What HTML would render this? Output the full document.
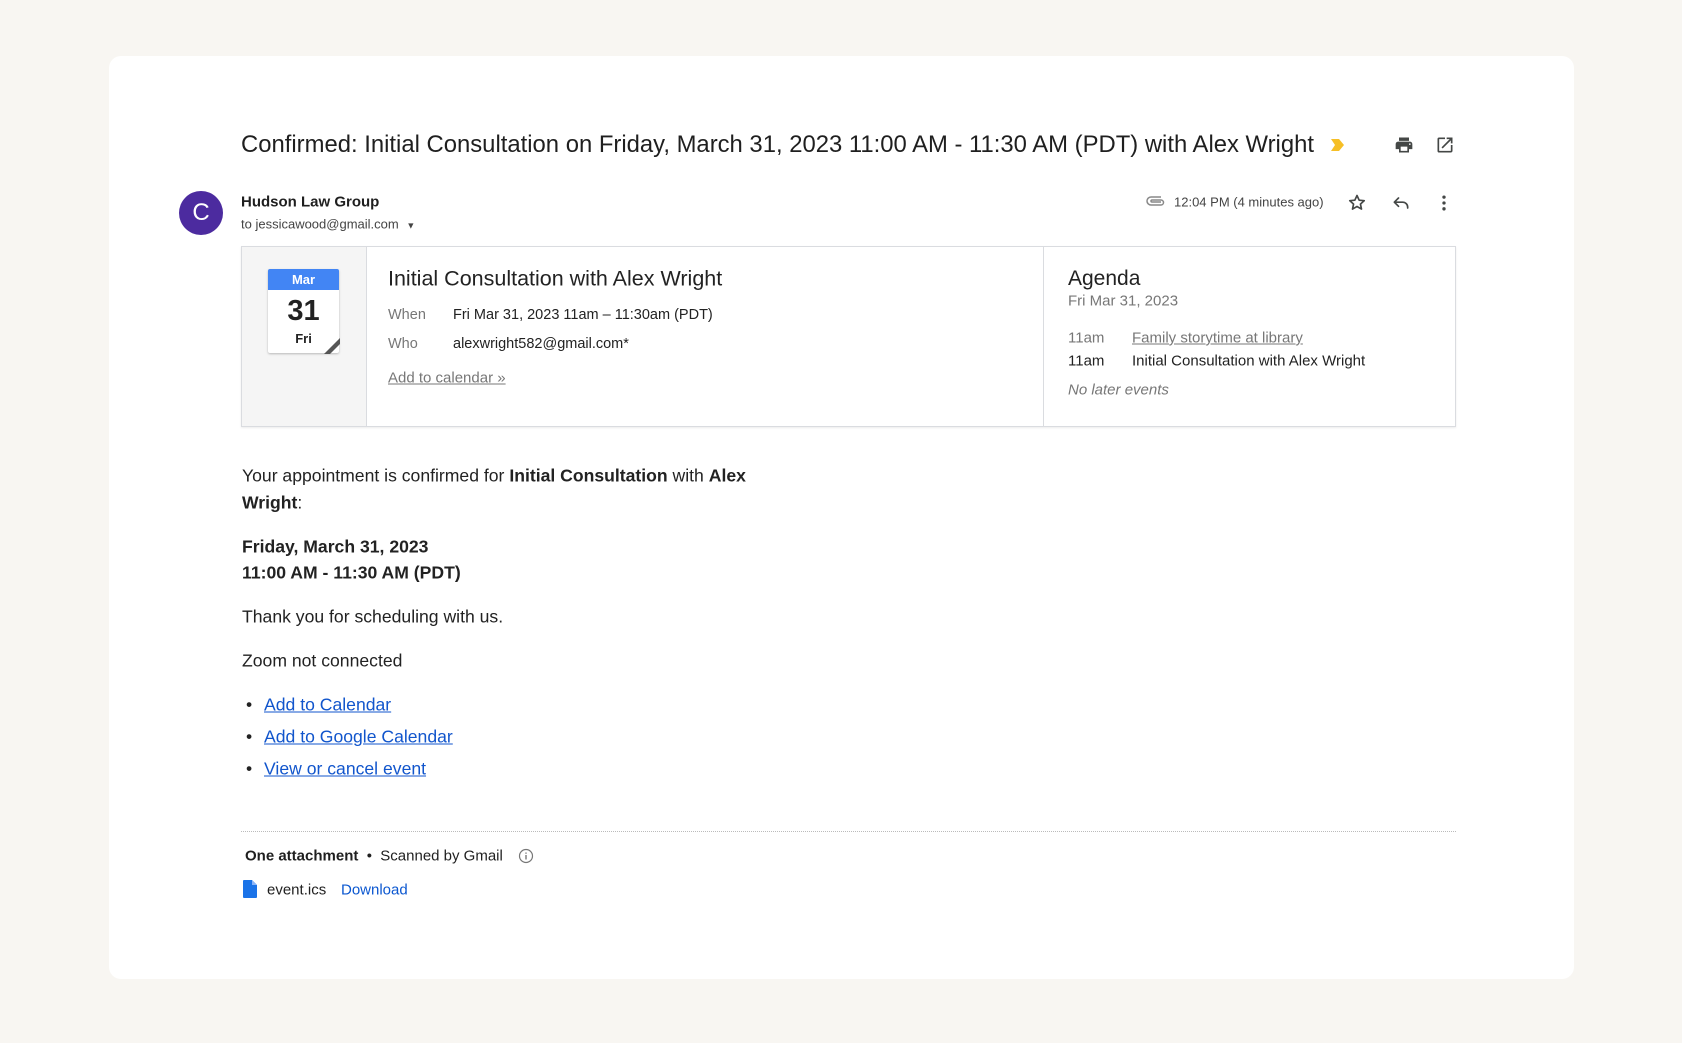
<!DOCTYPE html>
<html><head><meta charset="utf-8"><style>
*{margin:0;padding:0;box-sizing:border-box}
body{width:1682px;height:1043px;background:#f8f6f2;font-family:"Liberation Sans",Arial,sans-serif;color:#202124;position:relative;overflow:hidden}
.card{position:absolute;left:109px;top:56px;width:1465px;height:923px;background:#fff;border-radius:12px}
.a{position:absolute;white-space:nowrap}
.c{transform:translateY(-50%)}
.box{position:absolute;left:241px;top:246px;width:1215px;height:181px;border:1px solid #dadce0;box-shadow:0 1px 2px rgba(0,0,0,.08)}
.lnk{color:#1155cc;text-decoration:underline}
</style></head><body>
<div class="card"></div>
<div class="a c" style="left:241px;top:145px;font-size:23.85px;color:#1f1f1f">Confirmed: Initial Consultation on Friday, March 31, 2023 11:00 AM - 11:30 AM (PDT) with Alex Wright</div>
<svg class="a" style="left:1330px;top:138px" width="16" height="14" viewBox="0 0 16 14"><path d="M1 1h8l5 6-5 6H1l4-6z" fill="#f6bf26"/></svg>
<svg class="a" style="left:1394px;top:135px" width="20" height="20" viewBox="0 0 24 24"><path d="M19 8H5c-1.7 0-3 1.3-3 3v6h4v4h12v-4h4v-6c0-1.7-1.3-3-3-3zm-3 11H8v-5h8v5zm3-7c-.6 0-1-.4-1-1s.4-1 1-1 1 .4 1 1-.4 1-1 1zM18 3H6v4h12V3z" fill="#444746"/></svg>
<svg class="a" style="left:1435px;top:135px" width="20" height="20" viewBox="0 0 24 24"><path d="M19 19H5V5h7V3H5a2 2 0 00-2 2v14a2 2 0 002 2h14c1.1 0 2-.9 2-2v-7h-2v7zM14 3v2h3.6l-9.8 9.8 1.4 1.4L19 6.4V10h2V3h-7z" fill="#444746"/></svg>
<div class="a" style="left:179px;top:191px;width:44px;height:44px;border-radius:50%;background:#4c2b9f;color:#fff;font-size:24px;line-height:44px;text-align:center">C</div>
<div class="a c" style="left:241px;top:202px;font-size:15px;font-weight:bold;color:#1f1f1f">Hudson Law Group</div>
<div class="a c" style="left:241px;top:224px;font-size:13px;color:#444">to jessicawood@gmail.com <span style="font-size:9px;margin-left:4px">▼</span></div>
<svg class="a" style="left:1146px;top:194px" width="20" height="14" viewBox="0 0 20 14"><path d="M15 3H5a4 4 0 000 8h10a2.5 2.5 0 000-5H6a1 1 0 000 2h9" fill="none" stroke="#888" stroke-width="1.5"/></svg>
<div class="a c" style="left:1174px;top:202px;font-size:13px;color:#444">12:04 PM (4 minutes ago)</div>
<svg class="a" style="left:1347px;top:193px" width="20" height="20" viewBox="0 0 24 24"><path d="M12 3l2.6 5.6 6.1.6-4.6 4.1 1.3 6L12 16.2 6.6 19.3l1.3-6L3.3 9.2l6.1-.6z" fill="none" stroke="#444746" stroke-width="2" stroke-linejoin="round"/></svg>
<svg class="a" style="left:1391px;top:193px" width="20" height="20" viewBox="0 0 24 24"><path d="M9 6l-5 5 5 5M4 11h10a6 6 0 016 6v1" fill="none" stroke="#444746" stroke-width="2" stroke-linejoin="round" stroke-linecap="round"/></svg>
<svg class="a" style="left:1434px;top:193px" width="20" height="20" viewBox="0 0 24 24"><circle cx="12" cy="5" r="2" fill="#444746"/><circle cx="12" cy="12" r="2" fill="#444746"/><circle cx="12" cy="19" r="2" fill="#444746"/></svg>

<div class="box">
 <div class="a" style="left:0;top:0;width:125px;height:179px;background:#f5f5f5;border-right:1px solid #dadce0"></div>
 <div class="a" style="left:801px;top:0;width:1px;height:179px;background:#dadce0"></div>
 <div class="a" style="left:26px;top:22px;width:71px;height:84px;background:#fff;box-shadow:0 1px 2px rgba(0,0,0,.25);border-radius:2px"></div>
 <div class="a" style="left:26px;top:22px;width:71px;height:21px;background:#4285f4;border-radius:2px 2px 0 0;color:#fff;font-size:13px;font-weight:bold;text-align:center;line-height:21px">Mar</div>
 <div class="a" style="left:26px;top:48px;width:71px;text-align:center;font-size:29px;font-weight:bold;color:#222">31</div>
 <div class="a" style="left:26px;top:84px;width:71px;text-align:center;font-size:13px;font-weight:bold;color:#222">Fri</div>
 <svg class="a" style="left:82px;top:91px" width="16" height="16"><path d="M16 0L0 16h6L16 6z" fill="#555"/></svg>
 <div class="a c" style="left:146px;top:32px;font-size:21.5px;color:#222">Initial Consultation with Alex Wright</div>
 <div class="a c" style="left:146px;top:68px;font-size:14.5px;color:#777">When</div>
 <div class="a c" style="left:211px;top:68px;font-size:14.5px;color:#222">Fri Mar 31, 2023 11am – 11:30am (PDT)</div>
 <div class="a c" style="left:146px;top:97px;font-size:14.5px;color:#777">Who</div>
 <div class="a c" style="left:211px;top:97px;font-size:14.5px;color:#222">alexwright582@gmail.com*</div>
 <div class="a c" style="left:146px;top:131px;font-size:15px;color:#777;text-decoration:underline">Add to calendar »</div>
 <div class="a c" style="left:826px;top:32px;font-size:21px;color:#222">Agenda</div>
 <div class="a c" style="left:826px;top:54px;font-size:15px;color:#777">Fri Mar 31, 2023</div>
 <div class="a c" style="left:826px;top:91px;font-size:15px;color:#777">11am</div>
 <div class="a c" style="left:890px;top:91px;font-size:15px;color:#777;text-decoration:underline">Family storytime at library</div>
 <div class="a c" style="left:826px;top:114px;font-size:15px;color:#222">11am</div>
 <div class="a c" style="left:890px;top:114px;font-size:15px;color:#222">Initial Consultation with Alex Wright</div>
 <div class="a c" style="left:826px;top:143px;font-size:15px;color:#777;font-style:italic">No later events</div>
</div>

<div style="font-size:17.6px;color:#222">
<div class="a c" style="left:242px;top:476px">Your appointment is confirmed for <b>Initial Consultation</b> with <b>Alex</b></div>
<div class="a c" style="left:242px;top:503px"><b>Wright</b>:</div>
<div class="a c" style="left:242px;top:547px"><b>Friday, March 31, 2023</b></div>
<div class="a c" style="left:242px;top:573px"><b>11:00 AM - 11:30 AM (PDT)</b></div>
<div class="a c" style="left:242px;top:617px">Thank you for scheduling with us.</div>
<div class="a c" style="left:242px;top:661px">Zoom not connected</div>
<div class="a c" style="left:246px;top:705px">•</div><div class="a c" style="left:264px;top:705px"><span class="lnk">Add to Calendar</span></div>
<div class="a c" style="left:246px;top:737px">•</div><div class="a c" style="left:264px;top:737px"><span class="lnk">Add to Google Calendar</span></div>
<div class="a c" style="left:246px;top:769px">•</div><div class="a c" style="left:264px;top:769px"><span class="lnk">View or cancel event</span></div>
</div>
<div class="a" style="left:241px;top:831px;width:1215px;border-top:1px dotted #bbb"></div>
<div class="a c" style="left:245px;top:856px;font-size:15px;color:#1f1f1f"><b>One attachment</b> &nbsp;•&nbsp; Scanned by Gmail</div>
<svg class="a" style="left:518px;top:848px" width="16" height="16" viewBox="0 0 16 16"><circle cx="8" cy="8" r="6.5" fill="none" stroke="#777" stroke-width="1.2"/><path d="M8 7v4.5M8 4.5v1.2" stroke="#777" stroke-width="1.4"/></svg>
<svg class="a" style="left:243px;top:880px" width="14" height="18" viewBox="0 0 14 18"><path d="M1 0h8l5 5v12a1 1 0 01-1 1H1a1 1 0 01-1-1V1a1 1 0 011-1z" fill="#1a73e8"/><path d="M9 0v5h5" fill="#8ab4f8"/></svg>
<div class="a c" style="left:267px;top:890px;font-size:15px;color:#1f1f1f">event.ics</div>
<div class="a c" style="left:341px;top:890px;font-size:15px;color:#0b57d0">Download</div>
</body></html>
